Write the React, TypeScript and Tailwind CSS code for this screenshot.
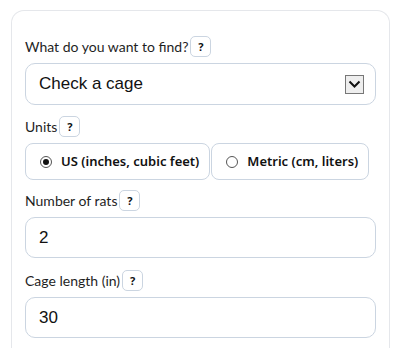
import { useState } from 'react'

function HelpButton() {
  return (
    <button
      type="button"
      className="ml-[2px] inline-flex h-[21px] w-[21px] items-center justify-center rounded-[5px] border border-[#cbd5e1] bg-white font-['Noto_Sans',sans-serif] text-[11px] font-bold leading-none text-[#111]"
    >
      ?
    </button>
  )
}

function FieldLabel({ text }: { text: string }) {
  return (
    <div className="flex h-[21px] items-center font-['Lato',sans-serif] text-[14px] text-[#1f1f1f]">
      <span>{text}</span>
      <HelpButton />
    </div>
  )
}

function TextField({ value }: { value: string }) {
  return (
    <div className="mt-[6px] flex h-[41px] items-center rounded-[10px] border border-[#cbd5e1] bg-white px-[13px] font-['Liberation_Sans',Arial,sans-serif] text-[17px] text-[#111]">
      {value}
    </div>
  )
}

function Radio({ checked, label, onClick }: { checked: boolean; label: string; onClick: () => void }) {
  return (
    <button
      type="button"
      onClick={onClick}
      className="flex h-[37px] items-center gap-[9px] rounded-[8px] border border-[#cbd5e1] bg-white pl-[14px] pr-[10px] text-[13px] font-semibold text-[#111]"
    >
      <span className="flex h-[12px] w-[12px] items-center justify-center rounded-full border border-[#555]">
        {checked && <span className="h-[6px] w-[6px] rounded-full bg-[#111]" />}
      </span>
      {label}
    </button>
  )
}

export default function App() {
  const [units, setUnits] = useState<'us' | 'metric'>('us')

  return (
    <div className="h-[348px] overflow-hidden bg-white pl-[11px] pt-[10px] font-['Noto_Sans','Open_Sans',sans-serif]">
      <div className="w-[379px] rounded-t-[13px] border border-b-0 border-[#e5e7eb] px-[13px] pt-[25px]">
        <FieldLabel text="What do you want to find?" />
        <div className="mt-[6px] flex h-[42px] items-center justify-between rounded-[10px] border border-[#cbd5e1] bg-white pl-[13px] pr-[11px] font-['Liberation_Sans',Arial,sans-serif] text-[17px] text-[#111]">
          <span>Check a cage</span>
          <span className="flex h-[19px] w-[19px] items-center justify-center border border-[#777] bg-[#eeeeee]">
            <svg width="13" height="9" viewBox="0 0 13 9">
              <path d="M1.5 1.5 L6.5 6.5 L11.5 1.5" fill="none" stroke="#111" strokeWidth="2" />
            </svg>
          </span>
        </div>

        <div className="mt-[11px]">
          <FieldLabel text="Units" />
        </div>
        <div className="mt-[6px] flex gap-[1px]">
          <Radio checked={units === 'us'} label="US (inches, cubic feet)" onClick={() => setUnits('us')} />
          <Radio checked={units === 'metric'} label="Metric (cm, liters)" onClick={() => setUnits('metric')} />
        </div>

        <div className="mt-[10px]">
          <FieldLabel text="Number of rats" />
        </div>
        <TextField value="2" />

        <div className="mt-[12px]">
          <FieldLabel text="Cage length (in)" />
        </div>
        <TextField value="30" />

        <div className="mt-[11px]">
          <FieldLabel text="Cage width (in)" />
        </div>
      </div>
    </div>
  )
}
